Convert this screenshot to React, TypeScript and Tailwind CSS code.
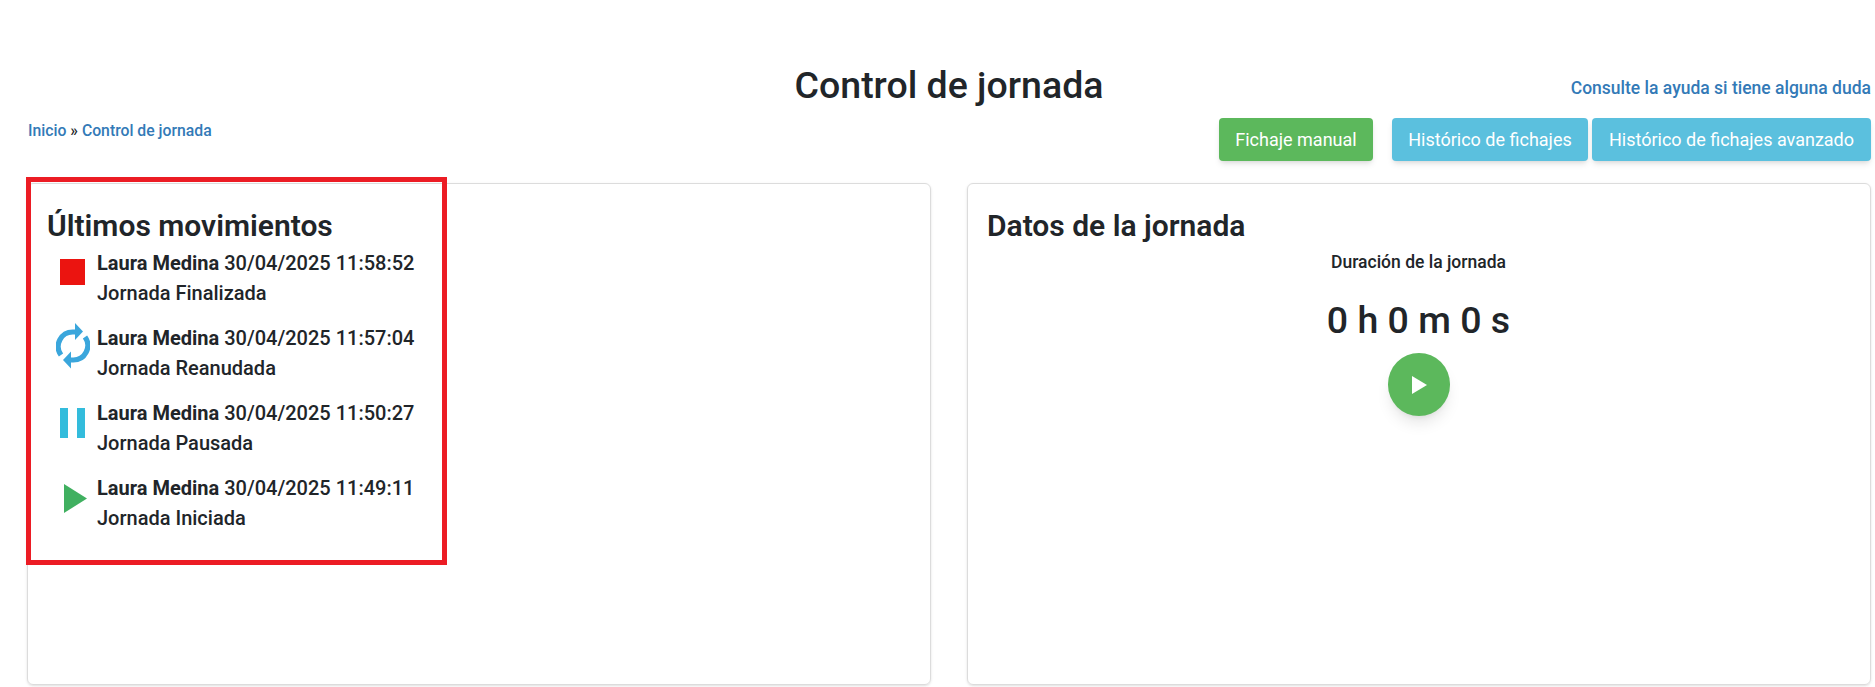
import React from "react";

const moves = [
  { time: "30/04/2025 11:58:52", label: "Jornada Finalizada", icon: "stop" },
  { time: "30/04/2025 11:57:04", label: "Jornada Reanudada", icon: "sync" },
  { time: "30/04/2025 11:50:27", label: "Jornada Pausada", icon: "pause" },
  { time: "30/04/2025 11:49:11", label: "Jornada Iniciada", icon: "play" },
];

function MoveIcon({ name }: { name: string }) {
  if (name === "stop")
    return (
      <svg width="34" height="46" viewBox="0 0 34 46" className="block">
        <rect x="4" y="11" width="25" height="26" fill="#eb1410" />
      </svg>
    );
  if (name === "sync")
    return (
      <svg width="34" height="46" viewBox="0 0 34 46" className="block">
        <path d="M5 32 A14.5 14.5 0 0 1 17 9 L19 9" fill="none" stroke="#3aa6dc" strokeWidth="5.2" />
        <path d="M19 0 L27 8.5 L19 17 Z" fill="#3aa6dc" />
        <path d="M29 14 A14.5 14.5 0 0 1 17 37 L15 37" fill="none" stroke="#3aa6dc" strokeWidth="5.2" />
        <path d="M15 28.5 L7 37 L15 45.5 Z" fill="#3aa6dc" />
      </svg>
    );
  if (name === "pause")
    return (
      <svg width="34" height="46" viewBox="0 0 34 46" className="block">
        <rect x="4" y="10" width="8" height="30" fill="#33bcdc" />
        <rect x="21" y="10" width="8" height="30" fill="#33bcdc" />
      </svg>
    );
  return (
    <svg width="34" height="46" viewBox="0 0 34 46" className="block">
      <path d="M8 11 L31 25.5 L8 40 Z" fill="#40b060" />
    </svg>
  );
}

export default function App() {
  return (
    <div className="bg-white h-[687px] overflow-hidden pl-[27px] pr-[4px] pt-[60px] font-['Roboto',sans-serif] text-[#212529]">
      <div className="grid grid-cols-[1fr_auto_1fr] items-center h-[50px]">
        <div />
        <h1 className="text-[37.5px] font-medium leading-[50px]">Control de jornada</h1>
        <a className="text-right text-[17.5px] font-medium text-[#337ab7] mt-[6px]">Consulte la ayuda si tiene alguna duda</a>
      </div>
      <div className="flex justify-between mt-[8px] h-[43px]">
        <div className="text-[15.75px] font-medium leading-[20px] pt-[3px] pl-px">
          <a className="text-[#337ab7]">Inicio</a> » <a className="text-[#337ab7]">Control de jornada</a>
        </div>
        <div className="flex">
          <button className="h-[43px] w-[154px] rounded-[4px] bg-[#5cb85c] text-white text-[18px] shadow-md mr-[19px]">Fichaje manual</button>
          <button className="h-[43px] w-[196px] rounded-[4px] bg-[#5bc0de] text-white text-[18px] shadow-md mr-[4px]">Histórico de fichajes</button>
          <button className="h-[43px] w-[279px] rounded-[4px] bg-[#5bc0de] text-white text-[18px] shadow-md">Histórico de fichajes avanzado</button>
        </div>
      </div>
      <div className="grid grid-cols-2 gap-[36px] mt-[22px]">
        <section className="relative h-[502px] rounded-[6px] border border-[#dcdcdc] pl-[19px] pt-[24px] shadow-sm">
          <h2 className="text-[30px] font-semibold leading-[36px]">Últimos movimientos</h2>
          <ul className="mt-[4px]">
            {moves.map((m) => (
              <li key={m.time} className="flex h-[75px] text-[20px] font-medium leading-[30px]">
                <div className="w-[50px] pl-[9px]">
                  <MoveIcon name={m.icon} />
                </div>
                <div className="whitespace-nowrap">
                  <div>
                    <b className="font-bold">Laura Medina</b> {m.time}
                  </div>
                  <div>{m.label}</div>
                </div>
              </li>
            ))}
          </ul>
          <div className="absolute left-[-2px] top-[-7px] w-[421px] h-[388px] border-[5px] border-[#ec1c24] pointer-events-none" />
        </section>
        <section className="h-[502px] rounded-[6px] border border-[#dcdcdc] pl-[19px] pr-[20px] pt-[24px] shadow-sm">
          <h2 className="text-[30px] font-semibold leading-[36px]">Datos de la jornada</h2>
          <div className="flex flex-col items-center">
            <div className="text-[17.5px] font-medium leading-[24px] mt-[6px]">Duración de la jornada</div>
            <div className="text-[37.5px] font-medium leading-[50px] mt-[21px]">0 h 0 m 0 s</div>
            <button className="mt-[8px] w-[62px] h-[63px] rounded-full bg-[#5cb85c] shadow-lg flex items-center justify-center">
              <svg width="16" height="18" viewBox="0 0 16 18" className="ml-[3px]"><path d="M0 0 L15 9 L0 18 Z" fill="#fff" /></svg>
            </button>
          </div>
        </section>
      </div>
    </div>
  );
}
